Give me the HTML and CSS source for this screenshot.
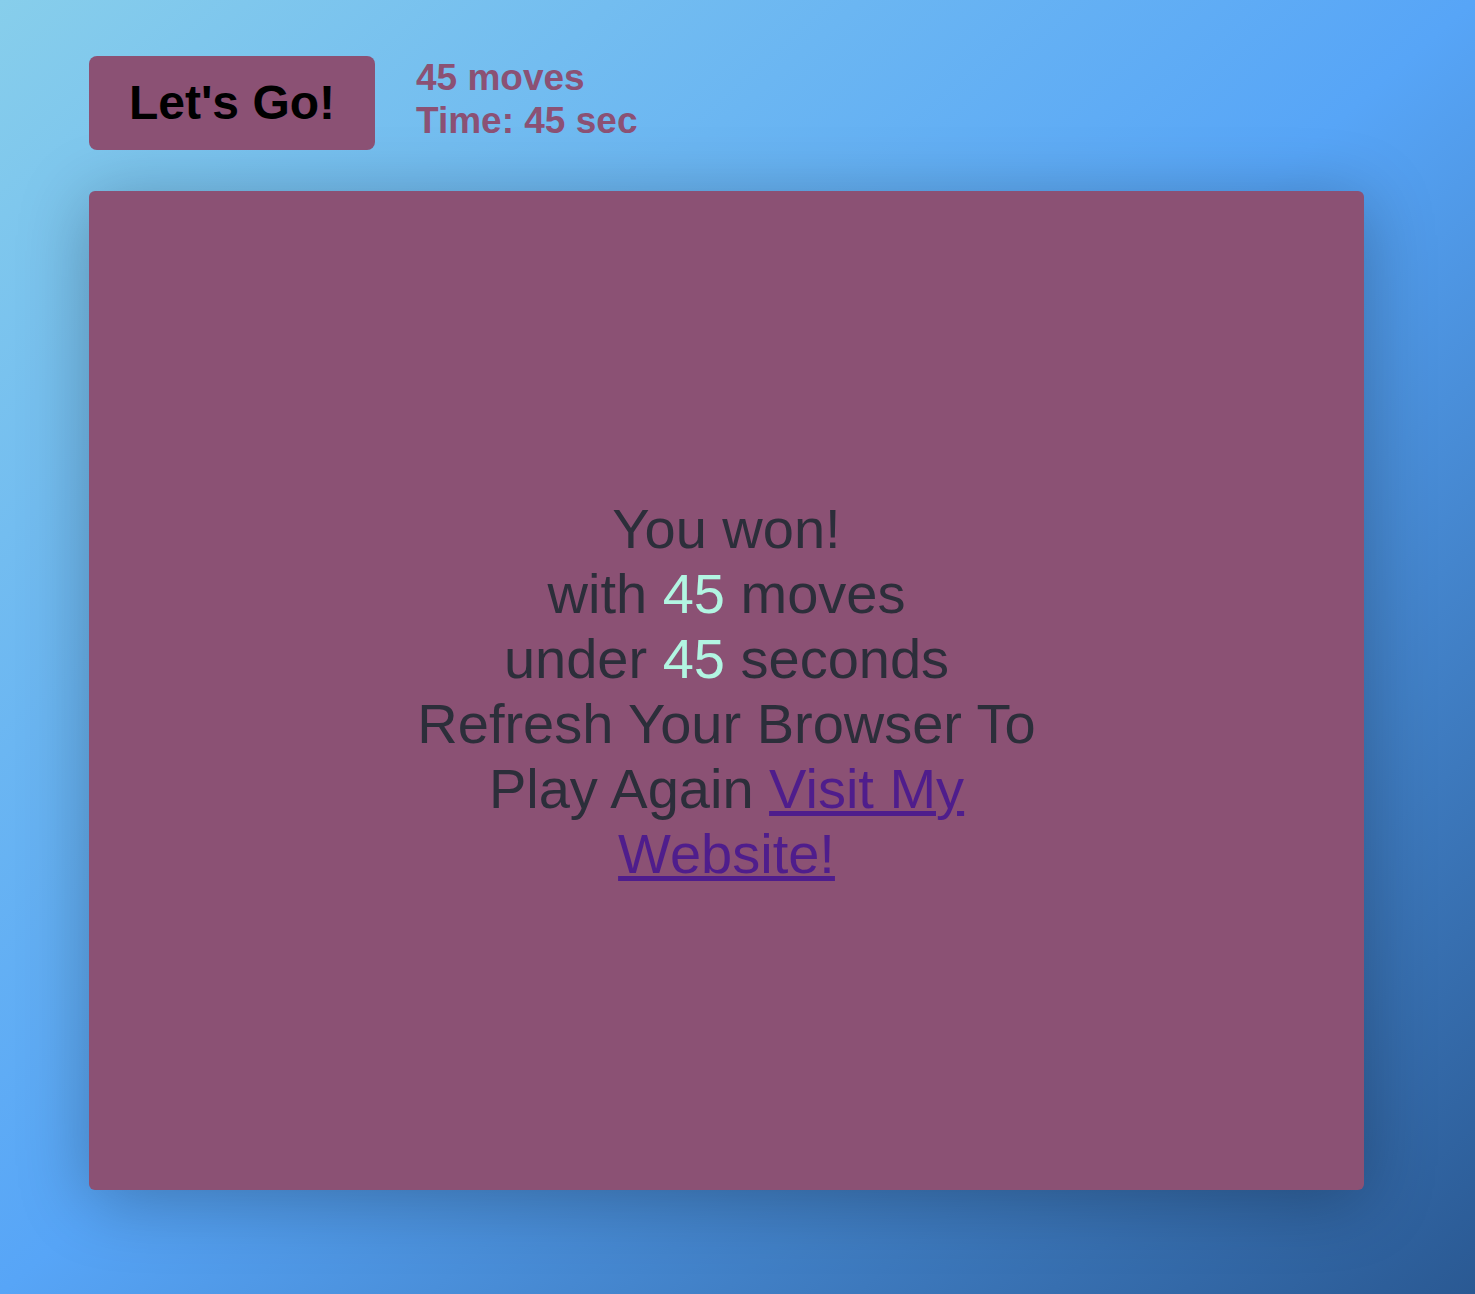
FILE: index.html
```html
<!DOCTYPE html>
<html lang="en">
<head>
<meta charset="utf-8">
<title>Memory Game</title>
<link rel="stylesheet" href="styles.css">
</head>
<body>
<div class="page">
  <header class="topbar">
    <button class="start-btn" type="button">Let's Go!</button>
    <div class="stats">
      <div class="moves">45 moves</div>
      <div class="timer">Time: 45 sec</div>
    </div>
  </header>
  <main class="board">
    <div class="message">
      You won!<br>
      with <span class="num">45</span> moves<br>
      under <span class="num">45</span> seconds<br>
      Refresh Your Browser To Play Again <a class="site-link" href="#">Visit My Website!</a>
    </div>
  </main>
</div>
</body>
</html>
```

FILE: styles.css
```css
html, body {
  margin: 0;
  padding: 0;
  height: 100%;
}

body {
  background: linear-gradient(to bottom right, #87ceeb 0%, #57a5f7 50%, #2a5993 100%);
  font-family: "Liberation Sans", Arial, sans-serif;
}

.page {
  padding: 56px 0 0 89px;
  width: 1275px;
}

.topbar {
  display: flex;
  align-items: flex-start;
  gap: 41px;
}

.start-btn {
  background: #8b5174;
  color: #000;
  border: none;
  border-radius: 8px;
  font-family: "Liberation Sans", Arial, sans-serif;
  font-weight: bold;
  font-size: 48px;
  line-height: 54px;
  padding: 20px 0;
  width: 286px;
  height: 94px;
  cursor: pointer;
}

.stats {
  color: #8b5174;
  font-weight: bold;
  font-size: 37px;
  line-height: 43px;
}

.board {
  margin-top: 41px;
  height: 999px;
  background: #8b5174;
  border-radius: 6px;
  box-shadow: 0 10px 70px rgba(0, 0, 0, 0.28);
  display: flex;
  align-items: center;
  justify-content: center;
}

.message {
  width: 50%;
  text-align: center;
  color: #2c2e3a;
  font-size: 56px;
  line-height: 65px;
}

.num {
  color: #b2f5e2;
}

.site-link {
  color: #4f1d8c;
}
```
